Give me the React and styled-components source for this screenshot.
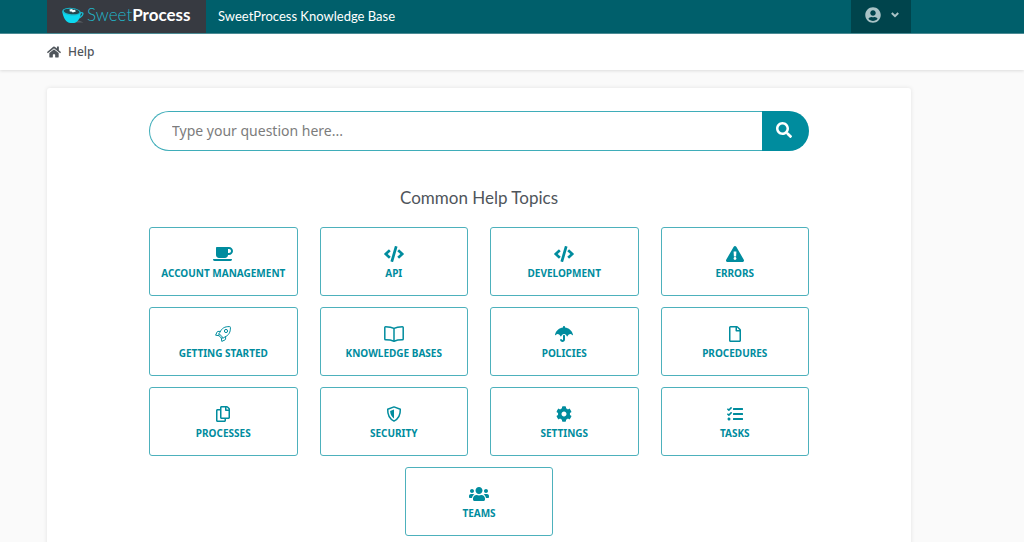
import styled, { createGlobalStyle } from "styled-components";
import {
  FaCode,
  FaCoffee,
  FaCog,
  FaExclamationTriangle,
  FaHome,
  FaRegCopy,
  FaRegFile,
  FaSearch,
  FaTasks,
  FaUmbrella,
  FaUserCircle,
  FaUsers,
} from "react-icons/fa";

const RocketIcon = () => (
  <svg viewBox="0 0 16 16" fill="none" stroke="currentColor" strokeLinejoin="round">
    <path d="M5 6.2C6.6 2.4 9.6 .4 14.6 .6Q15.4 .6 15.4 1.4C15.6 6.4 13.6 9.4 9.8 11L8.4 12 4 7.6Z" />
    <circle cx="11" cy="5" r="1.6" />
    <path d="M5.4 5.4H3Q2.4 5.4 2.1 6L.6 9.2 4 9.7M10.6 10.6V13Q10.6 13.6 10 13.9L6.8 15.4 6.3 12" />
    <path d="M4 7.6V9.7L6.3 12H8.4" />
  </svg>
);

const BookIcon = () => (
  <svg viewBox="0 0 20 16" fill="none" stroke="currentColor" strokeWidth="1.5" strokeLinejoin="round">
    <path d="M10 2.4C7.6 1.1 4.8 .8 1.6 .8Q.8 .8 .8 1.6V13Q.8 13.8 1.6 13.8C4.8 13.8 7.6 14.2 10 15.2 12.4 14.2 15.2 13.8 18.4 13.8Q19.2 13.8 19.2 13V1.6Q19.2 .8 18.4 .8C15.2 .8 12.4 1.1 10 2.4Z" />
    <path d="M10 2.4V15" />
  </svg>
);

const ShieldIcon = () => (
  <svg viewBox="0 0 16 16" fill="none" stroke="currentColor" strokeWidth="1.5" strokeLinejoin="round">
    <path d="M8 .9 14.3 3.3C14.5 8.8 12.3 13 8 15.1 3.7 13 1.5 8.8 1.7 3.3Z" />
    <path d="M8 3.5v9C5.5 10.8 4.2 8.2 4.1 5Z" fill="currentColor" stroke="none" />
  </svg>
);

const ChevronIcon = () => (
  <svg width="8" height="6" viewBox="0 0 8 6" fill="none" stroke="currentColor" strokeWidth="2">
    <path d="m.8 1 3.2 3.2L7.2 1" />
  </svg>
);

const CupLogo = () => (
  <svg width="22" height="17" viewBox="0 0 22 17" aria-hidden="true">
    <path d="M8 15.5h13.5L17 13.5Z" fill="#5b6066" />
    <path
      d="M17.5 6.2c3.3-1.6 4.2.3 2.6 2.5-1.2 1.7-3.3 2.7-5 3"
      fill="none"
      stroke="#18bcd2"
      strokeWidth="1.3"
    />
    <path d="M.3 4.5C1 10.5 4.2 16 8.5 16h3.8c3.5-.8 6.2-5.5 6.5-10Z" fill="#0cd8ef" />
    <ellipse cx="9.5" cy="4.8" rx="9.3" ry="3.9" transform="rotate(5 9.5 4.8)" fill="#18bcd2" />
    <ellipse cx="9.6" cy="4.5" rx="8" ry="2.7" transform="rotate(5 9.6 4.5)" fill="#24474f" />
    <path d="m7.5 2.5 2.5-.6 1 1 2-.2.8 1.8-3 .9-1.3-1-1.7.1Z" fill="#f2fbfc" />
  </svg>
);

const topics = [
  { name: "Account Management", icon: FaCoffee },
  { name: "API", icon: FaCode },
  { name: "Development", icon: FaCode },
  { name: "Errors", icon: FaExclamationTriangle },
  { name: "Getting Started", icon: RocketIcon },
  { name: "Knowledge Bases", icon: BookIcon },
  { name: "Policies", icon: FaUmbrella },
  { name: "Procedures", icon: FaRegFile },
  { name: "Processes", icon: FaRegCopy },
  { name: "Security", icon: ShieldIcon },
  { name: "Settings", icon: FaCog },
  { name: "Tasks", icon: FaTasks },
  { name: "Teams", icon: FaUsers },
];

const App = () => {
  return (
    <>
      <GlobalStyle />
      <Header>
        <HeaderInner>
          <Brand href="#" aria-label="SweetProcess">
            <CupLogo />
            <BrandName>
              Sweet<strong>Process</strong>
            </BrandName>
          </Brand>
          <SiteTitle href="#">SweetProcess Knowledge Base</SiteTitle>
          <UserMenu type="button" aria-label="Account menu">
            <FaUserCircle size={16} />
            <ChevronIcon />
          </UserMenu>
        </HeaderInner>
      </Header>
      <Breadcrumb aria-label="Breadcrumb">
        <Crumb href="#">
          <FaHome size={14} />
          Help
        </Crumb>
      </Breadcrumb>
      <Card>
        <SearchForm onSubmit={(e) => e.preventDefault()}>
          <SearchInput
            type="text"
            placeholder="Type your question here..."
            aria-label="Type your question here"
          />
          <SearchButton type="submit" aria-label="Search">
            <FaSearch size={16} />
          </SearchButton>
        </SearchForm>
        <Heading>Common Help Topics</Heading>
        <Topics>
          {topics.map(({ name, icon: Icon }) => (
            <Topic href="#" key={name}>
              <Icon />
              {name}
            </Topic>
          ))}
        </Topics>
      </Card>
    </>
  );
};

const GlobalStyle = createGlobalStyle`
  * {
    box-sizing: border-box;
  }
  body {
    margin: 0;
    background: #fafafa;
    color: #4f555b;
    font-family: "Noto Sans", "Open Sans", sans-serif;
    overflow-x: hidden;
  }
  a {
    color: inherit;
    text-decoration: none;
  }
`;

const Header = styled.header`
  background: #005f6b;
  border-bottom: 1px solid #4d8e97;
`;

const HeaderInner = styled.div`
  display: flex;
  height: 33px;
  margin: 0 113px 0 47px;
`;

const Brand = styled.a`
  display: flex;
  align-items: center;
  gap: 3px;
  width: 159px;
  padding: 0 0 3px 15px;
  background: #373a41;
`;

const BrandName = styled.span`
  font-family: Lato, sans-serif;
  font-size: 17px;
  line-height: 20px;
  font-weight: 300;
  color: #22b8cb;

  strong {
    font-weight: 700;
    color: #fff;
  }
`;

const SiteTitle = styled.a`
  padding-left: 12px;
  font-family: Lato, sans-serif;
  font-size: 13px;
  line-height: 32px;
  color: #fff;
`;

const UserMenu = styled.button`
  display: flex;
  align-items: center;
  gap: 10px;
  width: 60px;
  margin-left: auto;
  padding: 0 0 4px 14px;
  border: 0;
  background: #00444c;
  color: #a9c3c6;
  cursor: pointer;
`;

const Breadcrumb = styled.nav`
  display: flex;
  align-items: center;
  height: 36px;
  padding: 0 47px;
  background: #fff;
  box-shadow: 0 1px 3px rgba(0, 0, 0, 0.12);
`;

const Crumb = styled.a`
  display: flex;
  align-items: center;
  gap: 7px;
  font-size: 12px;
  line-height: 16px;
  font-weight: 500;
`;

const Card = styled.main`
  margin: 18px 113px 0 47px;
  padding: 23px 102px 24px;
  background: #fff;
  border-radius: 3px;
  box-shadow: 0 0 4px rgba(0, 0, 0, 0.1);
`;

const SearchForm = styled.form`
  display: flex;
  height: 40px;
`;

const SearchInput = styled.input`
  flex: 1;
  min-width: 0;
  padding: 0 22px 2px;
  border: 1px solid #3fadb9;
  border-right: 0;
  border-radius: 20px 0 0 20px;
  background: #fff;
  color: #4f555b;
  font-family: inherit;
  font-size: 14px;
  outline: none;

  &::placeholder {
    color: #7c7c7c;
    opacity: 1;
  }
`;

const SearchButton = styled.button`
  display: flex;
  align-items: center;
  justify-content: center;
  width: 47px;
  padding: 0 4px 2px 0;
  border: 0;
  border-radius: 0 20px 20px 0;
  background: #008c9e;
  color: #fff;
  cursor: pointer;
`;

const Heading = styled.h1`
  margin: 35px 0 17px;
  font-family: Lato, sans-serif;
  font-size: 17px;
  line-height: 24px;
  font-weight: 400;
  text-align: center;
`;

const Topics = styled.div`
  display: flex;
  flex-wrap: wrap;
  justify-content: center;
  gap: 11px 22px;
`;

const Topic = styled.a`
  display: flex;
  flex-direction: column;
  align-items: center;
  gap: 4px;
  width: calc((100% - 66px) / 4);
  height: 69px;
  padding-top: 18px;
  border: 1px solid #4db1bc;
  border-radius: 3px;
  color: #008c9e;
  font-size: 10px;
  line-height: 14px;
  font-weight: 700;
  text-transform: uppercase;

  svg {
    width: 20px;
    height: 16px;
  }
`;

export default App;
